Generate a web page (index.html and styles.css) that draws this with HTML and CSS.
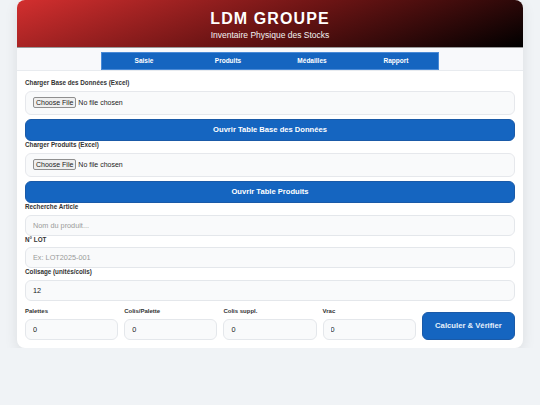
FILE: index.html
```html
<!DOCTYPE html>
<html lang="fr">
<head>
<meta charset="utf-8">
<title>LDM GROUPE - Inventaire</title>
<link rel="stylesheet" href="styles.css">
</head>
<body>
<div class="container">
  <header class="header">
    <h1 class="title">LDM GROUPE</h1>
    <p class="subtitle">Inventaire Physique des Stocks</p>
  </header>
  <nav class="nav">
    <div class="tabs">
      <span class="tab">Saisie</span>
      <span class="tab">Produits</span>
      <span class="tab">Médailles</span>
      <span class="tab">Rapport</span>
    </div>
  </nav>
  <main class="content">
    <label class="label">Charger Base des Données (Excel)</label>
    <div class="filebox"><input type="file" class="file"></div>
    <button class="btn">Ouvrir Table Base des Données</button>

    <label class="label">Charger Produits (Excel)</label>
    <div class="filebox"><input type="file" class="file"></div>
    <button class="btn">Ouvrir Table Produits</button>

    <label class="label">Recherche Article</label>
    <input class="input" type="text" placeholder="Nom du produit...">

    <label class="label">N° LOT</label>
    <input class="input" type="text" placeholder="Ex: LOT2025-001">

    <label class="label">Colisage (unités/colis)</label>
    <input class="input" type="text" value="12">

    <div class="row">
      <div class="field">
        <label class="label small">Palettes</label>
        <input class="input" type="text" value="0">
      </div>
      <div class="field">
        <label class="label small">Colis/Palette</label>
        <input class="input" type="text" value="0">
      </div>
      <div class="field">
        <label class="label small">Colis suppl.</label>
        <input class="input" type="text" value="0">
      </div>
      <div class="field">
        <label class="label small">Vrac</label>
        <input class="input" type="text" value="0">
      </div>
      <button class="btn calc">Calculer &amp; Vérifier</button>
    </div>
  </main>
</div>
</body>
</html>
```

FILE: styles.css
```css
* { box-sizing: border-box; }
html, body { margin: 0; padding: 0; }
body {
  background: #f0f3f6;
  font-family: "Liberation Sans", Arial, sans-serif;
  color: #333;
}
.container {
  width: 506px;
  margin: 0 auto;
  background: #fff;
  border-radius: 8px;
  box-shadow: 0 4px 14px rgba(0,0,0,0.09);
  overflow: hidden;
}
.header {
  height: 48px;
  background: linear-gradient(160deg, #d32f2f 0%, #6b1414 50%, #000 100%);
  color: #fff;
  text-align: center;
  padding-top: 10px;
  border-bottom: 1px solid #9a9a9a;
}
.title {
  margin: 0;
  font-size: 16px;
  line-height: 17px;
  font-weight: bold;
  letter-spacing: 1.1px;
}
.subtitle {
  margin: 3px 0 0;
  font-size: 8.5px;
  line-height: 10px;
  color: #f2f2f2;
}
.nav {
  height: 23px;
  background: #f8f9fb;
  border-bottom: 1px solid #e8ebef;
  padding-top: 4px;
}
.tabs {
  width: 338px;
  height: 18px;
  margin-left: 84px;
  background: #1565c0;
  border: 1px solid #4a8ad6;
  display: flex;
}
.tab {
  flex: 1;
  text-align: center;
  color: #fff;
  font-size: 6.5px;
  font-weight: bold;
  line-height: 16px;
}
.content {
  padding: 8px 8px 8px;
  display: flex;
  flex-direction: column;
}
.label {
  display: block;
  font-size: 6.3px;
  font-weight: bold;
  color: #333;
  line-height: 8.5px;
  margin: 0 0 3px;
}
.filebox {
  height: 24px;
  background: #f9fafb;
  border: 1px solid #e6e8ec;
  border-radius: 6px;
  padding: 0 7px;
  display: flex;
  align-items: center;
}
.file {
  font-family: "Liberation Sans", Arial, sans-serif;
  font-size: 7px;
  color: #222;
}
.file::file-selector-button {
  font-family: "Liberation Sans", Arial, sans-serif;
  font-size: 7px;
  padding: 1px 2px;
  margin-right: 2px;
  background: #efefef;
  border: 1px solid #8f8f8f;
  border-radius: 2px;
  color: #222;
}
.btn {
  height: 22.5px;
  margin-top: 4px;
  margin-bottom: 0;
  background: #1565c0;
  color: #fff;
  border: 1px solid #1a5aa8;
  border-radius: 6px;
  font-family: "Liberation Sans", Arial, sans-serif;
  font-size: 7.6px;
  font-weight: bold;
}
.input {
  height: 21px;
  background: #f9fafb;
  border: 1px solid #e4e7eb;
  border-radius: 6px;
  padding: 0 7px;
  font-family: "Liberation Sans", Arial, sans-serif;
  font-size: 7.3px;
  color: #222;
  margin: 0;
  width: 100%;
}
.input::placeholder { color: #9a9a9a; }
.row {
  display: grid;
  grid-template-columns: repeat(5, 1fr);
  column-gap: 6px;
  align-items: end;
  margin-top: 6.5px;
}
.field { display: flex; flex-direction: column; }
.label.small { font-size: 6px; }
.row .input { height: 21.5px; }
.calc {
  height: 28.5px;
  margin: 0;
  font-size: 7.7px;
  color: #e6f0fb;
}
```
